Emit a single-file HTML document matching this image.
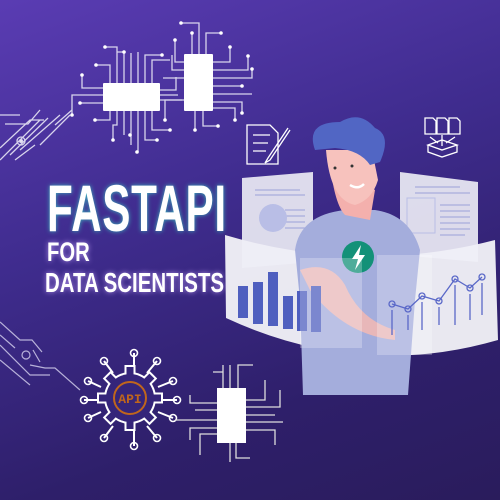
<!DOCTYPE html>
<html><head><meta charset="utf-8"><style>
html,body{margin:0;padding:0}
body{width:500px;height:500px;overflow:hidden;background:linear-gradient(160deg,#5a3cb3 0%,#3f2c8e 40%,#2e1f6a 75%,#2a1c5c 100%);position:relative;font-family:"Liberation Sans",sans-serif}
svg{position:absolute;left:0;top:0}
.t{position:absolute;color:#fff;font-weight:bold;font-family:"Liberation Sans",sans-serif;transform-origin:0 0;white-space:nowrap}
</style></head><body>
<svg width="500" height="500" viewBox="0 0 500 500">
<g stroke="#e8e6f5" stroke-width="1.3" fill="none" opacity="0.9">
<path d="M0 115 H20 M5 124 H28 L40 110 M0 148 L30 120 H44 M10 155 L48 118 M0 160 L40 120"/>
<path d="M20 150 L60 115 M15 160 L35 145 M72 110 L55 125 M70 115 L40 145"/>
<circle cx="21" cy="141" r="4"/><circle cx="21" cy="141" r="1.5" fill="#fff"/>
<path d="M117 83 V47 H105 M124 83 V52 H117 M131 83 V53 M138 83 V52 M145 83 V55 H162 M152 83 V60 H170 M110 83 V65 H96 M103 88 H82 V75 M103 95 H72 V115 M103 103 H80"/>
<path d="M110 111 V120 H95 M117 111 V125 H113 V140 M124 111 V135 M131 111 V145 M138 111 V152 M145 111 V140 H157 M152 111 V130 H170 M160 95 H178 M160 100 H182 M160 90 H176 V77"/>
<path d="M192 54 V33 M199 54 V23 H181 M206 54 V33 H221 M184 62 H175 V40 M184 70 H172 V55 M184 78 H163 M213 62 H230 V47 M213 70 H248 V56 M213 78 H252 V69 M213 86 H242 M213 94 H252 M213 102 H242 V113 M184 100 H165 V120 M195 111 V130 M203 111 V126 H218 M213 108 H235 V120"/>
</g>
<g fill="#fff">
<rect x="103" y="83" width="57" height="28" rx="1"/>
<rect x="184" y="54" width="29" height="57" rx="1"/>
<g><circle cx="105" cy="47" r="1.8"/><circle cx="124" cy="52" r="1.8"/><circle cx="162" cy="55" r="1.8"/><circle cx="96" cy="65" r="1.8"/><circle cx="82" cy="75" r="1.8"/><circle cx="72" cy="115" r="1.8"/><circle cx="80" cy="103" r="1.8"/><circle cx="95" cy="120" r="1.8"/><circle cx="113" cy="140" r="1.8"/><circle cx="130" cy="135" r="1.8"/><circle cx="137" cy="152" r="1.8"/><circle cx="157" cy="140" r="1.8"/><circle cx="170" cy="130" r="1.8"/><circle cx="181" cy="23" r="1.8"/><circle cx="192" cy="33" r="1.8"/><circle cx="221" cy="33" r="1.8"/><circle cx="175" cy="40" r="1.8"/><circle cx="230" cy="47" r="1.8"/><circle cx="248" cy="56" r="1.8"/><circle cx="252" cy="69" r="1.8"/><circle cx="242" cy="86" r="1.8"/><circle cx="242" cy="113" r="1.8"/><circle cx="195" cy="130" r="1.8"/><circle cx="218" cy="126" r="1.8"/><circle cx="165" cy="120" r="1.8"/><circle cx="235" cy="120" r="1.8"/></g>
</g>
<g stroke="#d8d4f0" stroke-width="1.2" fill="none" opacity="0.8">
<path d="M0 322 L20 340 H32 L42 352 M0 335 L15 348 M0 345 L30 375 H50 M0 360 L30 385 M30 365 L45 368 H55 L80 390 M33 350 L40 362"/>
<circle cx="26" cy="355" r="4"/>
</g>
<!-- API gear -->
<g stroke="#fff" stroke-width="2" fill="none">
<path d="M134 353 V370 M157 361 L147 373 M173 381 L158 387 M177 400 H158 M173 418 L158 412 M157 438 L147 426 M134 446 V430 M104 438 L113 426 M88 418 L101 412 M84 400 H100 M88 381 L101 387 M104 361 L113 373"/>
</g>
<g transform="translate(130,398)">
<g fill="#fff">
<circle r="26"/>
<rect x="-5.5" y="-33" width="11" height="10"/>
<rect x="-5.5" y="-33" width="11" height="10" transform="rotate(45)"/>
<rect x="-5.5" y="-33" width="11" height="10" transform="rotate(90)"/>
<rect x="-5.5" y="-33" width="11" height="10" transform="rotate(135)"/>
<rect x="-5.5" y="-33" width="11" height="10" transform="rotate(180)"/>
<rect x="-5.5" y="-33" width="11" height="10" transform="rotate(225)"/>
<rect x="-5.5" y="-33" width="11" height="10" transform="rotate(270)"/>
<rect x="-5.5" y="-33" width="11" height="10" transform="rotate(315)"/>
</g>
<g fill="#35257a">
<circle r="24"/>
<rect x="-3.5" y="-31" width="7" height="9"/>
<rect x="-3.5" y="-31" width="7" height="9" transform="rotate(45)"/>
<rect x="-3.5" y="-31" width="7" height="9" transform="rotate(90)"/>
<rect x="-3.5" y="-31" width="7" height="9" transform="rotate(135)"/>
<rect x="-3.5" y="-31" width="7" height="9" transform="rotate(180)"/>
<rect x="-3.5" y="-31" width="7" height="9" transform="rotate(225)"/>
<rect x="-3.5" y="-31" width="7" height="9" transform="rotate(270)"/>
<rect x="-3.5" y="-31" width="7" height="9" transform="rotate(315)"/>
</g>
</g>
<g fill="none" stroke="#fff" stroke-width="1.6"><circle cx="134" cy="353" r="3.5"/><circle cx="157" cy="361" r="3.5"/><circle cx="173" cy="381" r="3.5"/><circle cx="177" cy="400" r="3.5"/><circle cx="173" cy="418" r="3.5"/><circle cx="157" cy="438" r="3.5"/><circle cx="134" cy="446" r="3.5"/><circle cx="104" cy="438" r="3.5"/><circle cx="88" cy="418" r="3.5"/><circle cx="84" cy="400" r="3.5"/><circle cx="88" cy="381" r="3.5"/><circle cx="104" cy="361" r="3.5"/></g>
<circle cx="130" cy="398" r="16" fill="none" stroke="#c0661c" stroke-width="2"/>
<text x="130" y="403" text-anchor="middle" font-family="Liberation Mono" font-size="13" font-weight="bold" fill="#c0661c">API</text>
<g stroke="#ddd" stroke-width="1.3" fill="none">
<path d="M217 420 H175 M217 403 H190 V395 M217 410 H195 M217 428 H190 V440 M217 434 H200 V455 M223 388 V365 M230 388 V365 M238 388 V365 H253 M246 400 H265 V380 M246 407 H280 V390 M246 415 H275 M246 422 H283 M246 430 H275 V445 M230 443 V462 M236 443 V458 H250 M223 388 V372 H213"/>
</g>
<rect x="217" y="388" width="29" height="55" fill="#fff"/>
<path d="M225 235 Q360 275 495 240 L498 340 Q360 380 226 318 Z" fill="#f3f3f8" opacity="0.95"/>
<path d="M242 178 L313 172 L313 262 L242 268 Z" fill="#eeeef6" opacity="0.9"/>
<path d="M400 172 L478 182 L478 262 L400 255 Z" fill="#f0f0f7" opacity="0.9"/>
<g stroke="#9aa0d8" stroke-width="1"><path d="M255 190 H300 M255 195 H305 M285 210 H305 M285 216 H305 M285 222 H305 M285 228 H305 M415 187 H460 M415 193 H470 M440 205 H470 M440 211 H470 M440 217 H470 M440 223 H470 M440 229 H470 M440 235 H465"/></g>
<circle cx="273" cy="218" r="14" fill="#b9bee6"/>
<rect x="407" y="198" width="28" height="35" fill="none" stroke="#b9bee6"/>
<path d="M295 250 Q300 215 345 210 L375 210 Q410 215 420 250 L415 300 L408 395 L303 395 L300 300 Z" fill="#a4addc"/>
<path d="M330 165 Q335 205 345 215 L370 220 L375 190 Z" fill="#f4b0ad"/>
<path d="M326 150 Q330 200 355 205 Q372 200 378 180 L372 150 Z" fill="#f7c2bd"/>
<path d="M315 150 Q305 122 340 122 Q360 110 375 128 Q392 135 380 162 L370 165 Q360 150 335 148 Z" fill="#5166c4"/>
<path d="M350 185 Q358 190 364 184" stroke="#fff" stroke-width="2.5" fill="none"/>
<circle cx="335" cy="168" r="1.5" fill="#333"/><circle cx="352" cy="166" r="1.5" fill="#333"/>
<circle cx="358" cy="257" r="16" fill="#139178"/>
<path d="M361 245 L352 259 H358 L355 270 L365 255 H359 Z" fill="#fff"/>
<path d="M300 270 Q330 260 345 285 Q360 320 395 330 L395 340 Q345 335 310 290 Z" fill="#f4b8b3" opacity="0.85"/>
<g fill="#4f5fbf"><rect x="238" y="286" width="10" height="32"/><rect x="253" y="282" width="10" height="42"/><rect x="268" y="272" width="10" height="54"/><rect x="283" y="296" width="10" height="33"/><rect x="297" y="291" width="10" height="40"/><rect x="311" y="286" width="10" height="46"/></g>
<rect x="300" y="258" width="62" height="90" fill="#fff" opacity="0.25"/>
<rect x="377" y="255" width="55" height="100" fill="#fff" opacity="0.25"/>
<g stroke="#5a68c8" stroke-width="1.3" fill="none"><path d="M392 304 L408 309 L422 296 L439 301 L455 279 L470 288 L482 277"/><path d="M392 310 V335 M408 315 V330 M422 302 V330 M439 307 V325 M455 285 V325 M470 294 V320 M482 283 V315"/><circle cx="392" cy="304" r="3"/><circle cx="408" cy="309" r="3"/><circle cx="422" cy="296" r="3"/><circle cx="439" cy="301" r="3"/><circle cx="455" cy="279" r="3"/><circle cx="470" cy="288" r="3"/><circle cx="482" cy="277" r="3"/></g>
<g stroke="#fff" stroke-width="1.3" fill="none">
<path d="M247 125 H270 L278 133 V164 H247 Z M253 135 H270 M253 143 H268 M253 151 H266"/>
<path d="M288 128 L268 158 L265 163 L270 160 L290 130"/>
<path d="M425 118 H433 L436 121 V134 H425 Z M437 118 H445 L448 121 V134 H437 Z M449 118 H457 L460 121 V134 H449 Z M428 145 L442 140 L457 145 L442 150 Z M428 145 V152 L442 157 L457 152 V145 M442 135 V146 M430 137 L438 143 M455 137 L446 143"/>
</g>
</svg>
<div class="t" style="left:47px;top:175px;font-size:66px;line-height:66px;letter-spacing:1px;transform:scaleX(0.64);text-shadow:0 0 6px rgba(58,216,200,0.8)">FASTAPI</div>
<div class="t" style="left:47px;top:238px;font-size:27px;line-height:28px;transform:scaleX(0.75);text-shadow:0 0 6px rgba(201,168,255,0.8)">FOR</div>
<div class="t" style="left:45px;top:268px;font-size:28px;line-height:30px;transform:scaleX(0.73);text-shadow:0 0 6px rgba(201,168,255,0.8)">DATA SCIENTISTS</div>
</body></html>
